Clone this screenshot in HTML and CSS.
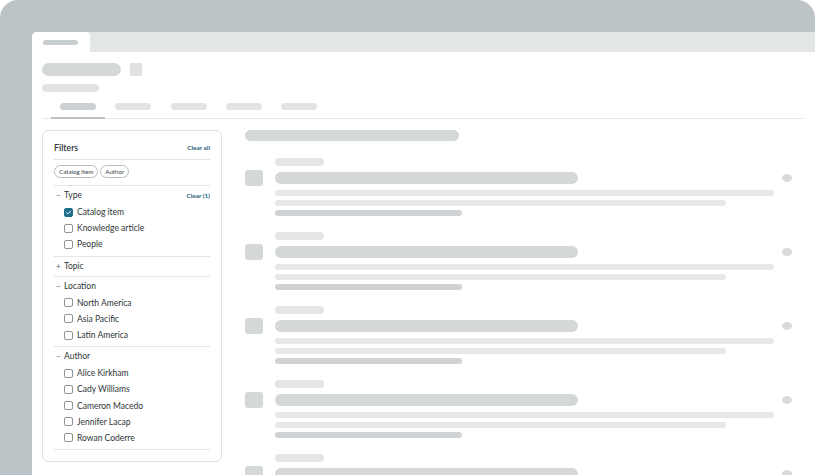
FILE: index.html
```html
<!DOCTYPE html>
<html lang="en">
<head>
    <meta charset="UTF-8">
    <meta name="viewport" content="width=device-width, initial-scale=1.0">
    <title>Catalog search</title>
    <link rel="stylesheet" href="styles.css">
</head>
<body>

    <div class="frame">
        <div class="window">

            <!-- Browser tab strip -->
            <div class="tabbar">
                <div class="tab"><span class="sk tab-pill"></span></div>
            </div>

            <div class="page">
                <!-- Page header -->
                <div class="title-row">
                    <span class="sk title-pill"></span>
                    <span class="sk title-box"></span>
                </div>
                <span class="sk subtitle-pill"></span>

                <div class="nav">
                    <div class="nav-tab active"><span class="sk nav-pill"></span></div>
                    <div class="nav-tab"><span class="sk nav-pill"></span></div>
                    <div class="nav-tab"><span class="sk nav-pill"></span></div>
                    <div class="nav-tab"><span class="sk nav-pill"></span></div>
                    <div class="nav-tab"><span class="sk nav-pill"></span></div>
                </div>

                <div class="main">
                    <!-- Filters -->
                    <aside class="filters">
                        <div class="filters-head">
                            <span class="filters-title">Filters</span>
                            <a class="link">Clear all</a>
                        </div>
                        <div class="chips">
                            <span class="chip">Catalog item</span>
                            <span class="chip">Author</span>
                        </div>

                        <div class="group">
                            <div class="group-head">
                                <span class="toggle">&minus;</span>
                                <span class="group-name">Type</span>
                                <a class="link">Clear (1)</a>
                            </div>
                            <label class="option"><span class="box checked"><svg viewBox="0 0 10 10"><path d="M2.3 5.2 L4.2 7 L7.8 3.2" fill="none" stroke="#fff" stroke-width="1.4" stroke-linecap="round" stroke-linejoin="round"/></svg></span>Catalog item</label>
                            <label class="option"><span class="box"></span>Knowledge article</label>
                            <label class="option"><span class="box"></span>People</label>
                        </div>

                        <div class="group collapsed">
                            <div class="group-head">
                                <span class="toggle">+</span>
                                <span class="group-name">Topic</span>
                            </div>
                        </div>

                        <div class="group">
                            <div class="group-head">
                                <span class="toggle">&minus;</span>
                                <span class="group-name">Location</span>
                            </div>
                            <label class="option"><span class="box"></span>North America</label>
                            <label class="option"><span class="box"></span>Asia Pacific</label>
                            <label class="option"><span class="box"></span>Latin America</label>
                        </div>

                        <div class="group">
                            <div class="group-head">
                                <span class="toggle">&minus;</span>
                                <span class="group-name">Author</span>
                            </div>
                            <label class="option"><span class="box"></span>Alice Kirkham</label>
                            <label class="option"><span class="box"></span>Cady Williams</label>
                            <label class="option"><span class="box"></span>Cameron Macedo</label>
                            <label class="option"><span class="box"></span>Jennifer Lacap</label>
                            <label class="option"><span class="box"></span>Rowan Coderre</label>
                        </div>
                    </aside>

                    <!-- Results (loading skeleton) -->
                    <section class="results">
                        <span class="sk results-title"></span>

                        <div class="item">
                            <span class="sk item-icon"></span>
                            <div class="item-body">
                                <span class="sk meta"></span>
                                <span class="sk heading"></span>
                                <span class="sk line long"></span>
                                <span class="sk line mid"></span>
                                <span class="sk line short"></span>
                            </div>
                            <span class="sk dot"></span>
                        </div>
                        <div class="item">
                            <span class="sk item-icon"></span>
                            <div class="item-body">
                                <span class="sk meta"></span>
                                <span class="sk heading"></span>
                                <span class="sk line long"></span>
                                <span class="sk line mid"></span>
                                <span class="sk line short"></span>
                            </div>
                            <span class="sk dot"></span>
                        </div>
                        <div class="item">
                            <span class="sk item-icon"></span>
                            <div class="item-body">
                                <span class="sk meta"></span>
                                <span class="sk heading"></span>
                                <span class="sk line long"></span>
                                <span class="sk line mid"></span>
                                <span class="sk line short"></span>
                            </div>
                            <span class="sk dot"></span>
                        </div>
                        <div class="item">
                            <span class="sk item-icon"></span>
                            <div class="item-body">
                                <span class="sk meta"></span>
                                <span class="sk heading"></span>
                                <span class="sk line long"></span>
                                <span class="sk line mid"></span>
                                <span class="sk line short"></span>
                            </div>
                            <span class="sk dot"></span>
                        </div>
                        <div class="item">
                            <span class="sk item-icon"></span>
                            <div class="item-body">
                                <span class="sk meta"></span>
                                <span class="sk heading"></span>
                                <span class="sk line long"></span>
                                <span class="sk line mid"></span>
                                <span class="sk line short"></span>
                            </div>
                            <span class="sk dot"></span>
                        </div>
                    </section>
                </div>
            </div>
        </div>
    </div>

</body>
</html>
```

FILE: styles.css
```css
html, body {
    margin: 0;
    padding: 0;
    height: 100%;
    overflow: hidden;
    background: #ffffff;
    font-family: Lato, "Noto Sans", Arial, sans-serif;
    color: #2e3538;
}

.frame {
    height: 100%;
    background-color: #bdc4c7;
    border-radius: 18px 18px 0 0;
    padding: 32px 0 0 32px;
    box-sizing: border-box;
}

.window {
    height: 100%;
    background: #ffffff;
    border-radius: 5px 0 0 0;
    overflow: hidden;
}

/* skeleton blocks */
.sk {
    display: block;
    background-color: #d5d8d9;
    border-radius: 10px;
}

.tabbar {
    height: 20px;
    background-color: #e3e6e7;
    display: flex;
}

.tab {
    width: 58px;
    background: #ffffff;
    border-radius: 0 4px 0 0;
    display: flex;
    align-items: center;
    padding-left: 11px;
    box-sizing: border-box;
}

.tab-pill {
    width: 35px;
    height: 5px;
    background-color: #c9ced0;
}

.page {
    padding: 0 11px 0 10px;
}

.title-row {
    display: flex;
    gap: 9px;
    margin-top: 11px;
}

.title-pill {
    width: 79px;
    height: 13px;
}

.title-box {
    width: 12px;
    height: 13px;
    border-radius: 1px;
    background-color: #dfe1e2;
}

.subtitle-pill {
    width: 57px;
    height: 8px;
    margin-top: 8px;
    background-color: #e1e3e4;
}

.nav {
    display: flex;
    gap: 1.25px;
    margin-top: 11px;
    padding-left: 9px;
    border-bottom: 1px solid #e6e8e9;
}

.nav-tab {
    padding: 0 9px 7px 9px;
    border-bottom: 2px solid transparent;
    margin-bottom: -1px;
}

.nav-tab.active {
    border-bottom-color: #bcc3c6;
}

.nav-pill {
    width: 36px;
    height: 7px;
    background-color: #e1e3e4;
}

.nav-tab.active .nav-pill {
    background-color: #cbd0d2;
}

.main {
    display: flex;
    gap: 23px;
    margin-top: 11px;
    align-items: flex-start;
}

/* filter panel */
.filters {
    width: 180px;
    box-sizing: border-box;
    border: 1px solid #dfe2e3;
    border-radius: 6px;
    padding: 0 11px 11px 11px;
    font-size: 8.5px;
}

.filters-head {
    height: 29px;
    padding-top: 5px;
    box-sizing: border-box;
    display: flex;
    align-items: center;
    justify-content: space-between;
    border-bottom: 1px solid #e3e5e6;
}

.filters-title {
    font-size: 8.8px;
    font-weight: 600;
}

.link {
    color: #1f6078;
    font-size: 6.4px;
    font-weight: 700;
}

.chips {
    display: flex;
    gap: 2px;
    padding: 5px 0 7px 0;
    border-bottom: 1px solid #e3e5e6;
}

.chip {
    height: 13px;
    line-height: 11px;
    box-sizing: border-box;
    border: 1px solid #b7bdc0;
    border-radius: 7px;
    padding: 0 4px;
    font-size: 6.2px;
    color: #3a4246;
}

.group {
    padding-bottom: 3px;
    border-bottom: 1px solid #e3e5e6;
}

.group.collapsed {
    padding-bottom: 1px;
}

.group-head {
    height: 18px;
    display: flex;
    align-items: center;
    padding-left: 2px;
}

.toggle {
    width: 8px;
    color: #555d61;
    font-size: 8px;
}

.group-name {
    flex: 1;
}

.option {
    height: 16.2px;
    display: flex;
    align-items: center;
    padding-left: 10px;
}

.box {
    width: 9px;
    height: 9px;
    box-sizing: border-box;
    border: 1px solid #8d9599;
    border-radius: 2px;
    margin-right: 4px;
    background: #ffffff;
    display: flex;
}

.box.checked {
    background-color: #1f6e8c;
    border-color: #1f6e8c;
}

.box svg {
    width: 100%;
    height: 100%;
}

/* results skeleton */
.results {
    flex: 1;
}

.results-title {
    width: 214px;
    height: 11px;
}

.item {
    display: flex;
    margin-top: 17px;
}

.item + .item {
    margin-top: 16px;
}

.item-icon {
    width: 18px;
    height: 16px;
    margin-top: 12px;
    border-radius: 3px;
    flex-shrink: 0;
}

.item-body {
    margin-left: 12px;
    display: flex;
    flex-direction: column;
}

.meta {
    width: 49px;
    height: 8px;
    background-color: #e3e5e6;
}

.heading {
    width: 303px;
    height: 12px;
    margin-top: 6px;
}

.line {
    height: 6px;
    margin-top: 4px;
    background-color: #e6e8e9;
}

.line.long {
    width: 499px;
    margin-top: 6px;
}

.line.mid {
    width: 451px;
}

.line.short {
    width: 187px;
    background-color: #cfd3d5;
}

.dot {
    width: 10px;
    height: 8px;
    margin-top: 16px;
    margin-left: auto;
    margin-right: 12px;
    border-radius: 50%;
    background-color: #d8dadb;
}
```
